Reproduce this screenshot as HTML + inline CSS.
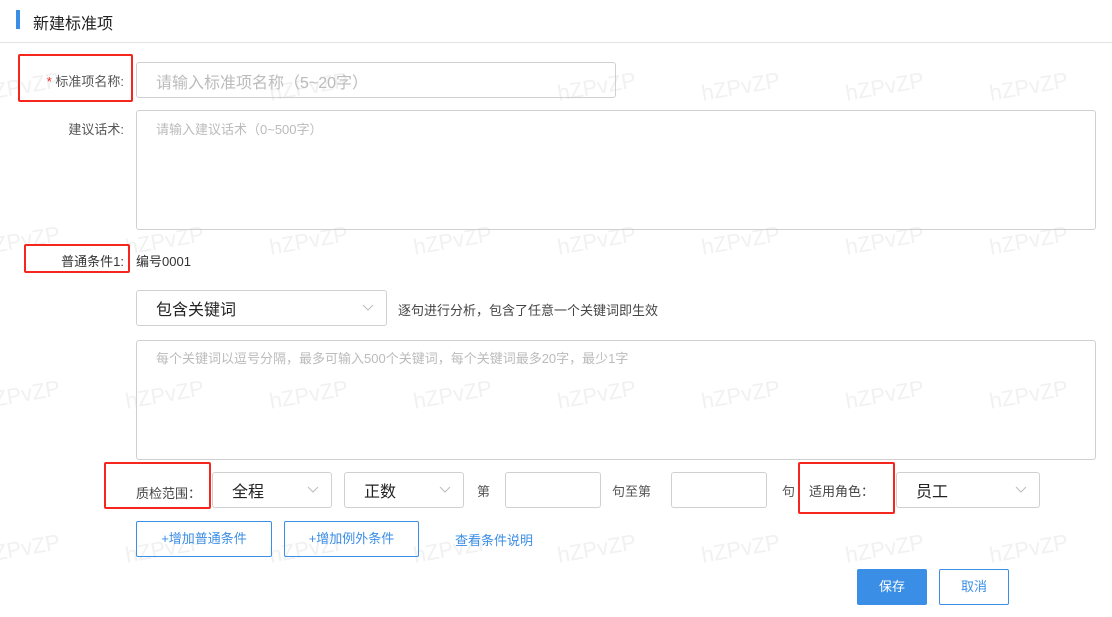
<!DOCTYPE html>
<html><head><meta charset="utf-8"><style>
*{margin:0;padding:0;box-sizing:border-box}
body{width:1112px;height:617px;background:#fff;position:relative;overflow:hidden;font-family:"Liberation Sans","Noto Sans CJK SC",sans-serif;color:#333}
.a{position:absolute;white-space:nowrap}
.wm{position:absolute;font-size:22px;color:#f1f1f1;transform:rotate(-10deg);font-family:"Liberation Sans",sans-serif;white-space:nowrap}
.box{position:absolute;border:1px solid #d0d0d0;border-radius:3px;background:transparent}
.red{position:absolute;border:2px solid #f5261e;border-radius:2px}
.lbl{position:absolute;font-size:13px;color:#555;white-space:nowrap;text-align:right}
.ph{position:absolute;color:#bbb;white-space:nowrap}
.sel{position:absolute;border:1px solid #d0d0d0;border-radius:3px;font-size:16px;color:#222}
.sel span{position:absolute;left:19px;top:5px}
.chev{position:absolute;right:12px;top:13px;width:12px;height:8px}
.btn{position:absolute;border:1px solid #3a8ee6;border-radius:2px;color:#3a8ee6;font-size:13px;text-align:center;line-height:33px}
</style></head><body>
<div class="wm" style="left:845px;top:74px">hZPvZP</div><div class="wm" style="left:989px;top:74px">hZPvZP</div>
<div class="wm" style="left:557px;top:74px">hZPvZP</div><div class="wm" style="left:701px;top:74px">hZPvZP</div>
<div class="wm" style="left:269px;top:74px">hZPvZP</div><div class="wm" style="left:-19px;top:74px">hZPvZP</div>
<div class="wm" style="left:-19px;top:228px">hZPvZP</div><div class="wm" style="left:125px;top:228px">hZPvZP</div><div class="wm" style="left:269px;top:228px">hZPvZP</div><div class="wm" style="left:413px;top:228px">hZPvZP</div><div class="wm" style="left:557px;top:228px">hZPvZP</div><div class="wm" style="left:701px;top:228px">hZPvZP</div><div class="wm" style="left:845px;top:228px">hZPvZP</div><div class="wm" style="left:989px;top:228px">hZPvZP</div>
<div class="wm" style="left:-19px;top:382px">hZPvZP</div><div class="wm" style="left:125px;top:382px">hZPvZP</div><div class="wm" style="left:269px;top:382px">hZPvZP</div><div class="wm" style="left:413px;top:382px">hZPvZP</div><div class="wm" style="left:557px;top:382px">hZPvZP</div><div class="wm" style="left:701px;top:382px">hZPvZP</div><div class="wm" style="left:845px;top:382px">hZPvZP</div><div class="wm" style="left:989px;top:382px">hZPvZP</div>
<div class="wm" style="left:-19px;top:536px">hZPvZP</div><div class="wm" style="left:125px;top:536px">hZPvZP</div><div class="wm" style="left:269px;top:536px">hZPvZP</div><div class="wm" style="left:413px;top:536px">hZPvZP</div><div class="wm" style="left:557px;top:536px">hZPvZP</div><div class="wm" style="left:701px;top:536px">hZPvZP</div><div class="wm" style="left:845px;top:536px">hZPvZP</div><div class="wm" style="left:989px;top:536px">hZPvZP</div>

<div class="a" style="left:16px;top:10px;width:4px;height:19px;background:#3a8ee6"></div>
<div class="a" style="left:33px;top:10px;font-size:16px;color:#222">新建标准项</div>
<div class="a" style="left:0;top:42px;width:1112px;height:1px;background:#e3e3e3"></div>

<div class="lbl" style="right:988px;top:71px"><span style="color:#f5261e">* </span>标准项名称:</div>
<div class="red" style="left:18px;top:54px;width:115px;height:48px"></div>
<div class="box" style="left:136px;top:62px;width:480px;height:36px"></div>
<div class="ph" style="left:156px;top:69px;font-size:16px">请输入标准项名称（5~20字）</div>

<div class="lbl" style="right:988px;top:119px">建议话术:</div>
<div class="box" style="left:136px;top:110px;width:960px;height:120px"></div>
<div class="ph" style="left:156px;top:119px;font-size:13px">请输入建议话术（0~500字）</div>

<div class="lbl" style="right:988px;top:251px;color:#333">普通条件1:</div>
<div class="red" style="left:24px;top:244px;width:106px;height:29px"></div>
<div class="a" style="left:136px;top:251px;font-size:13px;color:#333">编号0001</div>

<div class="sel" style="left:136px;top:290px;width:251px;height:36px"><span>包含关键词</span><svg class="chev" viewBox="0 0 12 8"><path d="M1 1L6 6L11 1" fill="none" stroke="#bbb" stroke-width="1"/></svg></div>
<div class="a" style="left:398px;top:300px;font-size:13px;color:#444">逐句进行分析，包含了任意一个关键词即生效</div>

<div class="box" style="left:136px;top:340px;width:960px;height:120px"></div>
<div class="ph" style="left:156px;top:348px;font-size:13px">每个关键词以逗号分隔，最多可输入500个关键词，每个关键词最多20字，最少1字</div>

<div class="lbl" style="left:136px;top:483px;color:#444">质检范围：</div>
<div class="red" style="left:104px;top:462px;width:107px;height:47px"></div>
<div class="sel" style="left:212px;top:472px;width:120px;height:36px"><span>全程</span><svg class="chev" viewBox="0 0 12 8"><path d="M1 1L6 6L11 1" fill="none" stroke="#bbb" stroke-width="1"/></svg></div>
<div class="sel" style="left:344px;top:472px;width:120px;height:36px"><span>正数</span><svg class="chev" viewBox="0 0 12 8"><path d="M1 1L6 6L11 1" fill="none" stroke="#bbb" stroke-width="1"/></svg></div>
<div class="lbl" style="left:477px;top:481px">第</div>
<div class="box" style="left:505px;top:472px;width:96px;height:36px"></div>
<div class="lbl" style="left:612px;top:481px">句至第</div>
<div class="box" style="left:671px;top:472px;width:96px;height:36px"></div>
<div class="lbl" style="left:782px;top:481px">句</div>
<div class="lbl" style="left:809px;top:481px;color:#444">适用角色：</div>
<div class="red" style="left:798px;top:462px;width:97px;height:52px"></div>
<div class="sel" style="left:896px;top:472px;width:144px;height:36px"><span>员工</span><svg class="chev" viewBox="0 0 12 8"><path d="M1 1L6 6L11 1" fill="none" stroke="#bbb" stroke-width="1"/></svg></div>

<div class="btn" style="left:136px;top:521px;width:136px;height:36px">+增加普通条件</div>
<div class="btn" style="left:284px;top:521px;width:135px;height:36px">+增加例外条件</div>
<div class="a" style="left:455px;top:530px;font-size:13px;color:#3a8ee6">查看条件说明</div>

<div class="btn" style="left:857px;top:569px;width:70px;height:36px;background:#3a8ee6;color:#fff">保存</div>
<div class="btn" style="left:939px;top:569px;width:70px;height:36px">取消</div>
</body></html>
